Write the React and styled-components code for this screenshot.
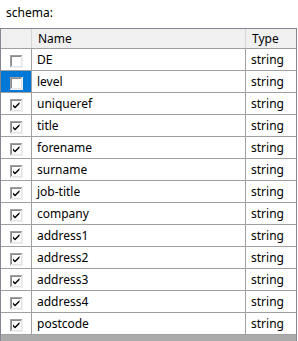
import React from "react";
import styled, { createGlobalStyle } from "styled-components";

const Global = createGlobalStyle`
  html, body { margin: 0; padding: 0; background: #fff; }
  body { font-family: "Noto Sans", "Open Sans", sans-serif; font-size: 12px; color: #000; }
`;

const Page = styled.div`
  width: 298px;
  height: 341px;
  overflow: hidden;
  display: flex;
  flex-direction: column;
`;

const Label = styled.div`
  padding: 5px 0 0 6px;
  height: 28px;
  box-sizing: border-box;
  line-height: 16px;
  font-size: 12px;
  flex: none;
`;

const Grid = styled.div`
  width: 297px;
  flex: 1;
  box-sizing: border-box;
  border: 1px solid #828790;
  border-bottom: none;
  background: #ababab;
  display: flex;
  flex-direction: column;
`;

const Row = styled.div`
  display: grid;
  grid-template-columns: 31px 214px 1fr;
  height: ${(p) => (p.$header ? "20px" : "22px")};
  box-sizing: border-box;
  border-bottom: 1px solid #a0a0a0;
  background: ${(p) => (p.$header ? "#f0f0f0" : "#fff")};
  flex: none;
`;

const Cell = styled.div`
  display: flex;
  align-items: center;
  padding-left: ${(p) => (p.$header ? "6px" : "5px")};
  border-right: 1px solid ${(p) => (p.$header ? "#d5d5d5" : "#a0a0a0")};
  background: ${(p) => (p.$selected ? "#0078d7" : "transparent")};
  &:last-child { border-right: none; }
  white-space: nowrap;
  overflow: hidden;
`;

const CheckCell = styled(Cell)`
  padding-left: 9px;
  align-items: flex-start;
  padding-top: 6px;
`;

const Check = ({ checked }) => (
  <svg width="13" height="13" viewBox="0 0 13 13">
    <rect x="0" y="0" width="13" height="13" fill="#f0f0f0" />
    <rect x="0" y="0" width="12" height="12" fill="#a0a0a0" />
    <rect x="1" y="1" width="11" height="11" fill="#e3e3e3" />
    <rect x="1" y="1" width="10" height="10" fill="#8a8a8a" />
    <rect x="2" y="2" width="9" height="9" fill="#fff" />
    {checked && (
      <path d="M3 5.5 L5 7.5 L9.5 3 L9.5 5 L5 9.5 L3 7.5 Z" fill="#000" />
    )}
  </svg>
);

const rows = [
  ["DE", false],
  ["level", false, true],
  ["uniqueref", true],
  ["title", true],
  ["forename", true],
  ["surname", true],
  ["job-title", true],
  ["company", true],
  ["address1", true],
  ["address2", true],
  ["address3", true],
  ["address4", true],
  ["postcode", true],
];

export default function App() {
  return (
    <Page>
      <Global />
      <Label>schema:</Label>
      <Grid>
        <Row $header>
          <Cell $header />
          <Cell $header>Name</Cell>
          <Cell $header>Type</Cell>
        </Row>
        {rows.map(([name, checked, sel]) => (
          <Row key={name}>
            <CheckCell $selected={sel}>
              <Check checked={checked} />
            </CheckCell>
            <Cell>{name}</Cell>
            <Cell>string</Cell>
          </Row>
        ))}
      </Grid>
    </Page>
  );
}
